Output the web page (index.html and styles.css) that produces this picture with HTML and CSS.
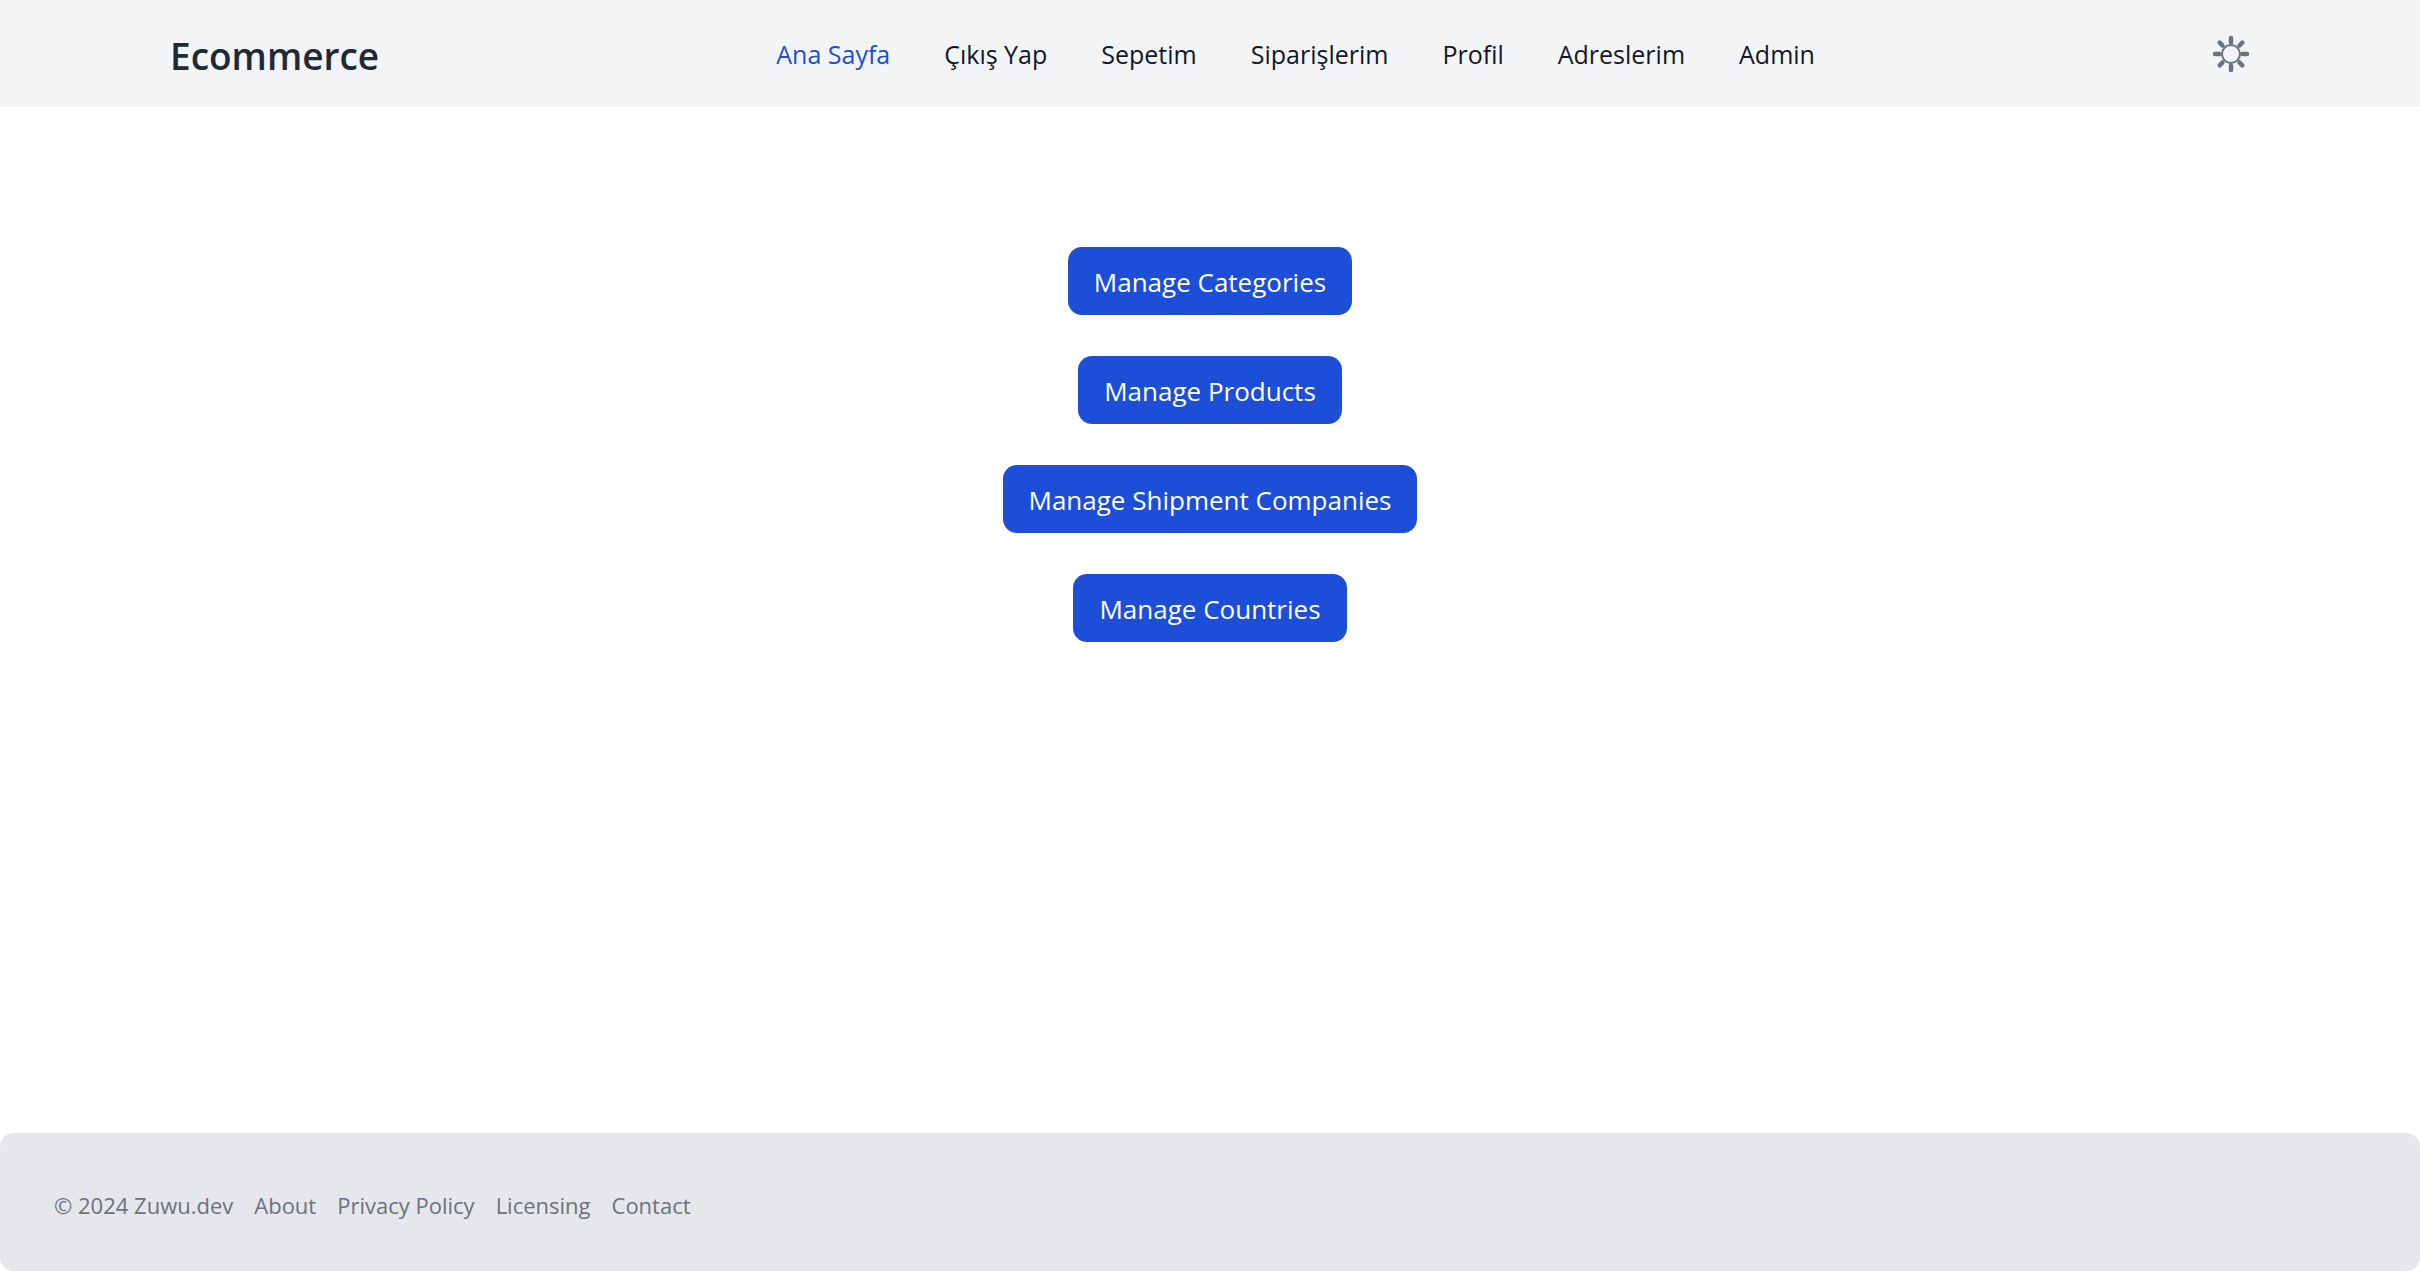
FILE: index.html
```html
<!DOCTYPE html>
<html lang="tr">
<head>
<meta charset="utf-8">
<meta name="viewport" content="width=device-width, initial-scale=1">
<title>Ecommerce</title>
<link rel="stylesheet" href="styles.css">
</head>
<body>
<header class="site-header">
  <div class="header-inner">
    <a class="brand" href="#">Ecommerce</a>
    <nav aria-label="Ana menü">
      <ul class="nav-list">
        <li><a class="nav-link active" href="#" aria-current="page">Ana Sayfa</a></li>
        <li><button class="nav-link" type="button">Çıkış Yap</button></li>
        <li><a class="nav-link" href="#">Sepetim</a></li>
        <li><a class="nav-link" href="#">Siparişlerim</a></li>
        <li><a class="nav-link" href="#">Profil</a></li>
        <li><a class="nav-link" href="#">Adreslerim</a></li>
        <li><a class="nav-link" href="#">Admin</a></li>
      </ul>
    </nav>
    <button class="theme-toggle" type="button" aria-label="Tema">
      <svg viewBox="0 0 38 38" width="38" height="38" fill="none" stroke="currentColor" stroke-linecap="round" aria-hidden="true">
        <circle cx="19" cy="19" r="9" stroke-width="2"/>
        <path stroke-width="4.500" d="M19 3v4.500M19 30.500v4.500M3 19h4.500M30.500 19h4.500M7.700 7.700l2.800 2.800M27.500 27.500l2.800 2.800M7.700 30.300l2.800-2.800M27.500 10.500l2.800-2.800"/>
      </svg>
    </button>
  </div>
</header>
<main class="actions">
  <a class="action" href="#">Manage Categories</a>
  <a class="action" href="#">Manage Products</a>
  <a class="action" href="#">Manage Shipment Companies</a>
  <a class="action" href="#">Manage Countries</a>
</main>
<footer class="site-footer">
  <span>© 2024 Zuwu.dev</span>
  <a href="#">About</a>
  <a href="#">Privacy Policy</a>
  <a href="#">Licensing</a>
  <a href="#">Contact</a>
</footer>
</body>
</html>
```
FILE: styles.css
```css
* {
  box-sizing: border-box;
}

body {
  display: flex;
  flex-direction: column;
  min-height: 100vh;
  margin: 0;
  background: #fff;
  color: #111827;
  font-family: "Segoe UI", "Open Sans", "Noto Sans", sans-serif;
  font-size: 26px;
  line-height: 40px;
}

a {
  color: inherit;
  text-decoration: none;
}

button {
  padding: 0;
  border: 0;
  background: none;
  color: inherit;
  font: inherit;
  cursor: pointer;
}

.site-header {
  padding: 24px 40px;
  background: #f3f4f6;
}

.header-inner {
  display: flex;
  align-items: center;
  justify-content: space-between;
  max-width: 2080px;
  min-height: 59px;
  margin: 0 auto;
}

.brand {
  padding-top: 4px;
  color: #1f2937;
  font-size: 37px;
  font-weight: 600;
}

.nav-list {
  display: flex;
  gap: 54px;
  margin: 0;
  padding: 0;
  list-style: none;
}

.nav-link {
  display: block;
  font-size: 25px;
  font-weight: 400;
}

.active {
  color: #1d4ed8;
}

.theme-toggle {
  display: flex;
  color: #6b7280;
}

.actions {
  display: flex;
  flex: 1;
  flex-direction: column;
  align-items: center;
  gap: 41px;
  padding: 140px 40px;
}

.action {
  padding: 15px 26px 13px;
  border-radius: 14px;
  background: #1d4ed8;
  color: #fff;
}

.site-footer {
  display: flex;
  align-items: center;
  gap: 21px;
  padding: 52px 54px 46px;
  border-radius: 14px;
  background: #e5e7eb;
  color: #6b7280;
  font-size: 22px;
}
```
